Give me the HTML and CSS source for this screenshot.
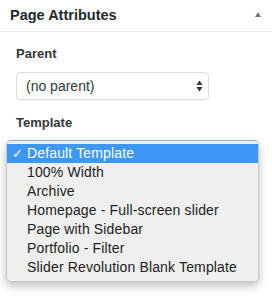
FILE: index.html
```html
<!DOCTYPE html>
<html>
<head>
<meta charset="utf-8">
<link rel="stylesheet" href="styles.css">
</head>
<body>
<div class="box">
  <div class="header">
    <span class="title">Page Attributes</span>
    <span class="toggle"></span>
  </div>
  <div class="inside">
    <div class="label label-parent">Parent</div>
    <div class="select">
      <span>(no parent)</span>
      <svg class="arrows" width="7" height="12" viewBox="0 0 7 12"><path d="M3.5 0.5 L6.5 5 L0.5 5 Z M3.5 11.5 L6.5 7 L0.5 7 Z" fill="#333"/></svg>
    </div>
    <div class="label label-template">Template</div>
    <div class="menu">
      <div class="item selected"><span class="check">✓</span>Default Template</div>
      <div class="item">100% Width</div>
      <div class="item">Archive</div>
      <div class="item">Homepage - Full-screen slider</div>
      <div class="item">Page with Sidebar</div>
      <div class="item">Portfolio - Filter</div>
      <div class="item">Slider Revolution Blank Template</div>
    </div>
  </div>
</div>
</body>
</html>
```
FILE: styles.css
```css
html, body {
  margin: 0;
  padding: 0;
  background: #fff;
}
body {
  font-family: "Liberation Sans", Arial, sans-serif;
  color: #23282d;
  width: 272px;
  height: 296px;
  overflow: hidden;
}
.header {
  border-bottom: 1px solid #eeeeee;
  display: flex;
  align-items: center;
  justify-content: space-between;
  padding: 0 11px 2px 10px;
  box-sizing: border-box;
  height: 32px;
}
.title {
  font-size: 14.5px;
  font-weight: bold;
  color: #23282d;
}
.toggle {
  width: 0;
  height: 0;
  border-left: 3.5px solid transparent;
  border-right: 3.5px solid transparent;
  border-bottom: 5px solid #72777c;
}
.inside {
  padding: 0 0 0 16px;
}
.label {
  font-size: 13px;
  font-weight: bold;
  color: #32373c;
  line-height: 16px;
}
.label-parent {
  margin-top: 14px;
  margin-bottom: 10px;
}
.select {
  width: 193px;
  height: 28px;
  box-sizing: border-box;
  border: 1px solid #dddddd;
  border-radius: 4px;
  display: flex;
  align-items: center;
  justify-content: space-between;
  padding: 0 5px 0 9px;
  font-size: 14px;
  color: #32373c;
  box-shadow: 0 1px 1px rgba(0,0,0,0.04);
}
.arrows {
  display: block;
}
.label-template {
  margin-top: 15px;
  margin-bottom: 9px;
}
.menu {
  margin-left: -10px;
  width: 253px;
  box-sizing: border-box;
  background: #efefef;
  border: 1px solid #c6c6c6;
  border-top-color: #8fb4e0;
  border-radius: 5px;
  padding: 3px 0 4px;
  box-shadow: 0 4px 10px rgba(0,0,0,0.25);
}
.item {
  height: 19px;
  line-height: 19px;
  font-size: 14px;
  letter-spacing: 0.15px;
  color: #222;
  padding-left: 20px;
  position: relative;
}
.item.selected {
  background: #3d98f5;
  color: #fff;
}
.check {
  position: absolute;
  left: 5px;
  top: 0;
  font-size: 13px;
  font-family: "DejaVu Sans", sans-serif;
}
```
